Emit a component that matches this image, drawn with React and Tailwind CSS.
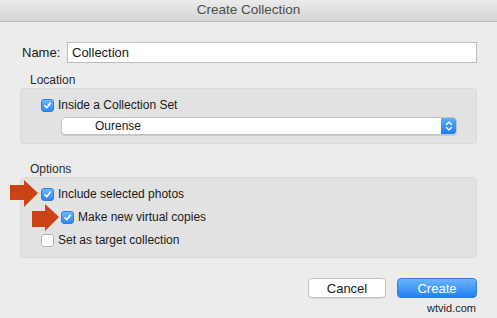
export default function App() {
  const Check = ({ checked }) =>
    checked ? (
      <span className="w-[13px] h-[13px] rounded-[3px] bg-gradient-to-b from-[#6cb7fc] to-[#2a87f3] border border-[#2b7fe0] flex items-center justify-center shrink-0">
        <svg width="9" height="9" viewBox="0 0 10 10">
          <path d="M2 5.3 L4.2 7.5 L8 2.6" fill="none" stroke="white" strokeWidth="1.8" strokeLinecap="round" strokeLinejoin="round" />
        </svg>
      </span>
    ) : (
      <span className="w-[13px] h-[13px] rounded-[3px] bg-white border border-[#b3b3b3] shrink-0" />
    );

  return (
    <div
      className="w-[497px] h-[318px] bg-[#ececec] relative overflow-hidden text-[#1a1a1a]"
      style={{ fontFamily: '"Liberation Sans", Arial, sans-serif' }}
    >
      {/* title bar */}
      <div className="h-[22px] bg-gradient-to-b from-[#ebebeb] to-[#d5d5d5] border-b border-[#b9b9b9] flex items-center justify-center text-[13.5px] text-[#4d4d4d]">
        Create Collection
      </div>

      <div className="px-[20px] pt-[20px]">
        {/* name */}
        <div className="flex items-center h-[21px]">
          <span className="text-[13px] ml-[2px] w-[45px]">Name:</span>
          <div className="flex-1 h-[21px] bg-white border border-[#bdbdbd] flex items-center px-[4px] text-[13px]">
            Collection
          </div>
        </div>

        {/* location */}
        <div className="text-[12px] ml-[10px] mt-[9px] h-[16px] leading-[16px] text-[#2a2a2a]">Location</div>
        <div className="h-[56px] bg-[#e2e2e2] border border-[#dadada] rounded-[4px] pl-[20px] pr-[19px] pt-[9px]">
          <div className="flex items-center gap-[4px] text-[12px] h-[14px]">
            <Check checked />
            <span>Inside a Collection Set</span>
          </div>
          <div className="ml-[20px] mt-[5px] h-[18px] bg-white rounded-[4px] border border-[#c4c4c4] shadow-[0_1px_0_rgba(0,0,0,0.1)] flex items-center justify-between text-[12px] overflow-hidden">
            <span className="ml-[33px]">Ourense</span>
            <span className="w-[15px] h-full bg-gradient-to-b from-[#5aaefb] to-[#1f7ff0] flex items-center justify-center">
              <svg width="8" height="12" viewBox="0 0 8 12">
                <path d="M1.5 4.5 L4 2 L6.5 4.5 M1.5 7.5 L4 10 L6.5 7.5" fill="none" stroke="white" strokeWidth="1.3" strokeLinecap="round" strokeLinejoin="round" />
              </svg>
            </span>
          </div>
        </div>

        {/* options */}
        <div className="text-[12px] ml-[10px] mt-[18px] h-[15px] leading-[15px] text-[#2a2a2a]">Options</div>
        <div className="h-[81px] bg-[#e2e2e2] border border-[#dadada] rounded-[4px] pl-[20px] pt-[9px] flex flex-col gap-[9px] text-[12px]">
          <div className="flex items-center gap-[4px] h-[14px]">
            <Check checked />
            <span>Include selected photos</span>
          </div>
          <div className="flex items-center gap-[4px] h-[14px] ml-[20px]">
            <Check checked />
            <span>Make new virtual copies</span>
          </div>
          <div className="flex items-center gap-[4px] h-[14px]">
            <Check />
            <span>Set as target collection</span>
          </div>
        </div>

        {/* buttons */}
        <div className="flex justify-end gap-[11px] mt-[20px]">
          <button className="w-[78px] h-[20px] bg-white border border-[#c2c2c2] rounded-[4px] text-[13px] shadow-[0_1px_0_rgba(0,0,0,0.08)]">
            Cancel
          </button>
          <button className="w-[80px] h-[20px] bg-gradient-to-b from-[#6ab5fc] to-[#1d7ff1] border border-[#2a7fe6] rounded-[4px] text-[13px] text-white">
            Create
          </button>
        </div>
        <div className="flex justify-end text-[11px] text-[#222] mt-[3px] mr-[1px] leading-[14px]">wtvid.com</div>
      </div>

      {/* arrows */}
      <svg className="absolute left-0 top-0 pointer-events-none" width="497" height="318">
        <path d="M10 185 H24 V180 L38 193 L24 207 V200 H10 Z" fill="#cb4216" />
        <path d="M32 211 H45 V204 L59 217 L45 231 V227 H32 Z" fill="#cb4216" />
      </svg>
    </div>
  );
}
